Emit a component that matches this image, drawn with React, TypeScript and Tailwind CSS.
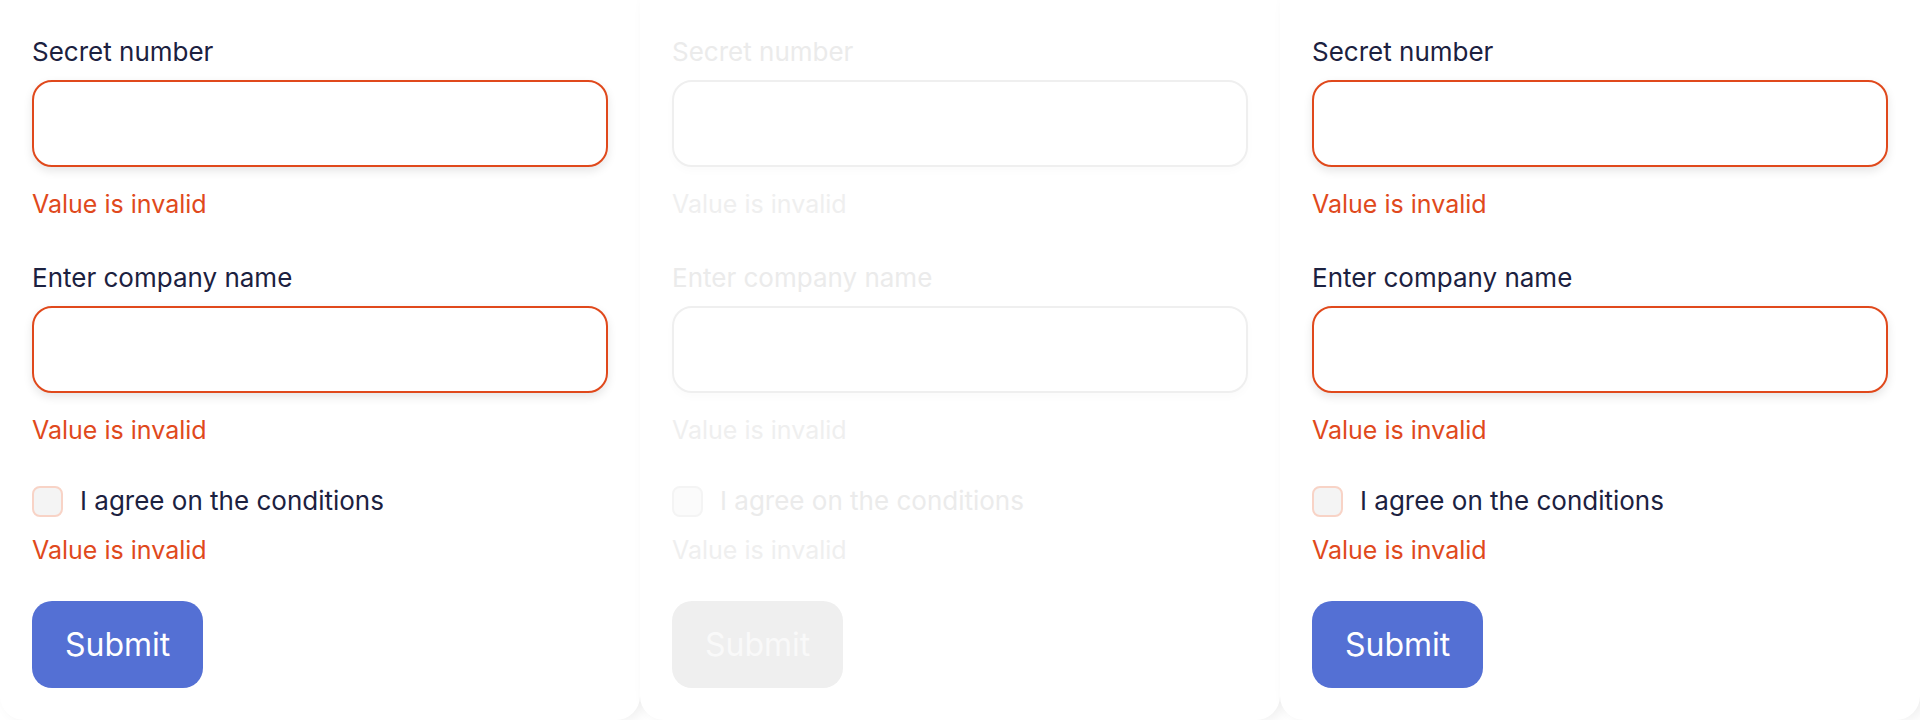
import React from 'react';

/** --- TYPES --- **/
interface FormPanelProps {
  disabled?: boolean;
}

const FONT = "font-['Inter','Liberation_Sans',sans-serif]";

/** --- SUB-COMPONENT: FIELD --- **/
const Field = ({ label, disabled }: { label: string; disabled?: boolean }) => (
  <div className="flex flex-col">
    <label className={`text-[26px] leading-8 mb-3 ${disabled ? 'text-[#ebebeb]' : 'text-[#1c2140]'}`}>
      {label}
    </label>
    <input
      disabled={disabled}
      className={`h-[87px] w-full rounded-[20px] border-2 bg-white outline-none
        ${disabled ? 'border-[#efefef] shadow-[0_4px_10px_rgba(0,0,0,0.02)]' : 'border-[#e0491c] shadow-[0_4px_10px_rgba(0,0,0,0.1)]'}`}
    />
    <p className={`mt-[21px] text-[25px] leading-8 ${disabled ? 'text-[#efefef]' : 'text-[#e0491c]'}`}>
      Value is invalid
    </p>
  </div>
);

/** --- SUB-COMPONENT: FORM PANEL --- **/
const FormPanel: React.FC<FormPanelProps> = ({ disabled }) => (
  <div className="relative w-[640px] h-[720px] shrink-0 bg-white rounded-b-[24px] shadow-[6px_0_14px_rgba(0,0,0,0.07)] px-8 pt-9">
    <Field label="Secret number" disabled={disabled} />
    <div className="mt-[42px]">
      <Field label="Enter company name" disabled={disabled} />
    </div>

    {/* Conditions checkbox */}
    <div className="mt-[39px] flex items-center gap-[17px]">
      <span
        className={`w-[31px] h-[31px] rounded-[8px] border-2
          ${disabled ? 'bg-[#fbfbfb] border-[#f4f4f4]' : 'bg-[#f4f4f4] border-[#f8d3c6]'}`}
      />
      <span className={`text-[26px] leading-8 ${disabled ? 'text-[#ebebeb]' : 'text-[#1c2140]'}`}>
        I agree on the conditions
      </span>
    </div>
    <p className={`mt-[17px] text-[25px] leading-8 ${disabled ? 'text-[#efefef]' : 'text-[#e0491c]'}`}>
      Value is invalid
    </p>

    <button
      disabled={disabled}
      className={`mt-[35px] h-[87px] px-[33px] rounded-[20px] text-[32px]
        ${disabled ? 'bg-[#efefef] text-[#f9f9f9]' : 'bg-[#5470d4] text-white'}`}
    >
      Submit
    </button>
  </div>
);

/** --- APP --- **/
export default function App() {
  return (
    <div className={`w-[1920px] h-[720px] overflow-hidden bg-white flex ${FONT}`}>
      <FormPanel />
      <FormPanel disabled />
      <FormPanel />
    </div>
  );
}
